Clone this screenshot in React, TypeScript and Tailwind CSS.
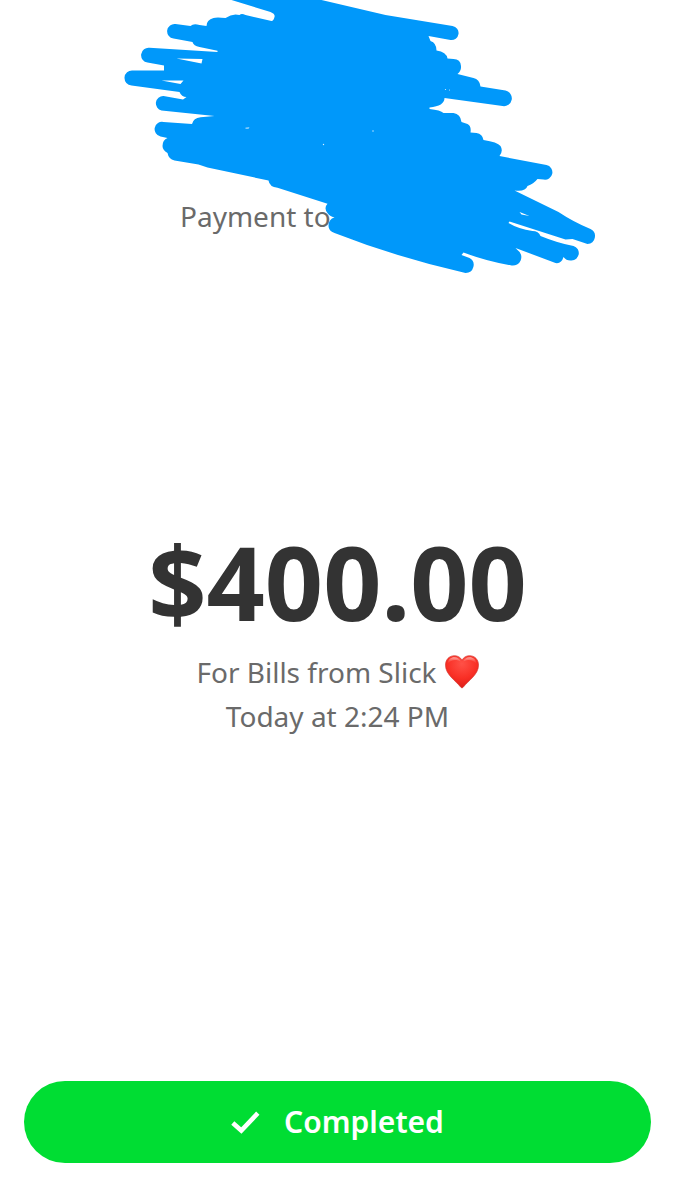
function Scribble() {
  return (
    <svg
      viewBox="0 0 675 280"
      aria-hidden="true"
      className="pointer-events-none absolute left-1/2 top-0 h-[280px] w-[675px] max-w-none -translate-x-1/2"
    >
      <path
        fill="#0098fa"
        fillRule="evenodd"
        d="M231 0L270 12Q275 14 274 17Q273 21 271 21L245 15Q241 13 239 15Q232 13 225 18Q216 17 213 18Q206 20 206 26L199 25Q193 23 190 26L175 24A7 7 0 0 0 173 38.6L192 42Q193 46 199 47L217 50.7V52L149 47.8A7.4 7.4 0 0 0 147 62.5L163.5 65.5V70.5H132A7.5 7.5 0 0 0 131 85.5L179 92Q181 97 186 97L182.5 99.5L163 96A7.3 7.3 0 0 0 161 110.4L214 116L200 117.3Q193 118 191.5 124L163 122A7.3 7.3 0 0 0 160 136.5L167 138Q162 140 162 146Q162 150 167 153Q168 159 174 160.5L198 164.5L207 167.5L268 180.5Q269 187 277 187.8L327 203.7Q323 208 327 213Q329 216 334 217.5Q328 219 328 226Q328 231 334 233Q395 257 465 273A8 8 0 0 0 469 258L461 255L463 252.5Q485 261 511 265.5A8.500 8.500 0 0 0 517 250L515 248L555 263Q561 264 563 257Q566 261 571 260.5A7.4 7.4 0 0 0 573 246Q557 243 540 236Q538 231 532 231Q518 229 508 223L509 221.5L565 239.5L572 239L587 244A7.9 7.9 0 0 0 590 229Q573 222 558 212L514 190.5Q525 192 527 186Q533 184 537 179L543 179.5A7.4 7.4 0 0 0 546 165L499 156Q503 151 500 146Q497 142 483 140Q482 134 476 133L470 132.5Q471 126 467 124L461 122Q460 114 453 113H443Q440 110 429 109V107.5Q444 106 444 98L502 106A7.8 7.8 0 0 0 505 90.6L480 86.5Q479 79 473 78L457 74Q461 71 460.5 66Q460 59 453 59L447 58.5Q446 52 436 50.5Q436 43 430 41L428 36L450 40A7 7 0 0 0 452 26L385 15L321 0Z M176 58.5L202 59L201 63.5Z M161 80.5H183L180 84Z M519 212L529 216L521 214.5Z M245 127.8L249 127.6L248 128.6L245 128.5Z"
      />
      <g fill="#d9efff">
        <circle cx="323" cy="144.5" r="0.7" />
        <circle cx="372.500" cy="131" r="0.7" />
        <circle cx="445" cy="89.500" r="0.6" />
        <circle cx="449" cy="90" r="0.5" />
      </g>
    </svg>
  );
}

function Heart() {
  return (
    <svg viewBox="0 0 34 34" role="img" aria-label="red heart" className="h-[34px] w-[34px]">
      <defs>
        <radialGradient id="heartFill" cx="0.5" cy="0.25" r="0.75">
          <stop offset="0" stopColor="#ff5147" />
          <stop offset="0.6" stopColor="#f92f25" />
          <stop offset="1" stopColor="#dc1d18" />
        </radialGradient>
        <linearGradient id="heartGloss" x1="0" y1="0" x2="0" y2="1">
          <stop offset="0" stopColor="#ffb3ac" stopOpacity="0.95" />
          <stop offset="1" stopColor="#ff5147" stopOpacity="0" />
        </linearGradient>
      </defs>
      <path
        d="M17 5.200C15.500 2.200 12.700 .7 9.500 .7C4.200 .7 .5 4.500 .5 10.200C.5 19.500 10.500 25.500 15.800 32.200Q17 33.800 18.200 32.200C23.500 25.500 33.500 19.500 33.500 10.200C33.500 4.500 29.800 .7 24.500 .7C21.300 .7 18.500 2.200 17 5.200Z"
        fill="url(#heartFill)"
        stroke="#d63b34"
        strokeWidth="0.7"
      />
      <path d="M2.500 9C3 4.200 6 2.200 9.300 2.200C12.500 2.200 14.800 4 15.800 6.500C12 4.200 6 3.800 2.500 9Z" fill="url(#heartGloss)" />
      <path d="M31.500 9C31 4.200 28 2.200 24.700 2.200C21.500 2.200 19.200 4 18.200 6.500C22 4.200 28 3.800 31.500 9Z" fill="url(#heartGloss)" />
    </svg>
  );
}

export default function App() {
  return (
    <div className="relative flex min-h-screen flex-col overflow-hidden bg-white font-['Noto_Sans',sans-serif] text-[28px] leading-[44px] text-[#6a6a6a]">
      <header className="flex justify-center pt-[194px]">
        <p className="w-[315px]">Payment to</p>
      </header>
      <Scribble />
      <main className="flex flex-1 flex-col items-center justify-center pb-[60px]">
        <h1 className="mb-2 text-[102px] leading-[120px] font-bold text-[#333333]">$400.00</h1>
        <p className="flex items-center gap-2">
          For Bills from Slick
          <Heart />
        </p>
        <p>Today at 2:24 PM</p>
      </main>
      <footer className="px-6 pb-[37px]">
        <button
          type="button"
          className="flex h-[82px] w-full items-center justify-center gap-6 rounded-full bg-[#00dd33] text-[30px] font-semibold text-white"
        >
          <svg viewBox="0 0 29 23" aria-hidden="true" className="h-[23px] w-[29px]">
            <path d="M1.800 12L10.300 19.500L26.800 2.200" fill="none" stroke="currentColor" strokeWidth="4.600" />
          </svg>
          Completed
        </button>
      </footer>
    </div>
  );
}
